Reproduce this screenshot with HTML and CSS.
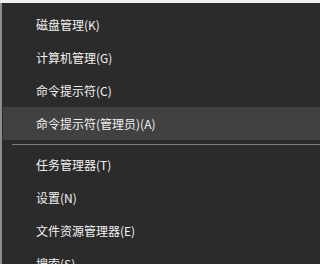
FILE: index.html
```html
<!DOCTYPE html>
<html lang="zh-CN">
<head>
<meta charset="utf-8">
<link rel="stylesheet" href="styles.css">
</head>
<body>
<div class="topstrip"></div>
<div class="menu">
  <div class="item">磁盘管理(K)</div>
  <div class="item">计算机管理(G)</div>
  <div class="item">命令提示符(C)</div>
  <div class="item active">命令提示符(管理员)(A)</div>
  <div class="sep"></div>
  <div class="item">任务管理器(T)</div>
  <div class="item">设置(N)</div>
  <div class="item">文件资源管理器(E)</div>
  <div class="item">搜索(S)</div>
</div>
</body>
</html>
```

FILE: styles.css
```css
html, body {
  margin: 0;
  padding: 0;
  background: #2b2b2b;
  overflow: hidden;
}
.topstrip {
  height: 3px;
  background: #f1f1f1;
}
.menu {
  display: flex;
  flex-direction: column;
  background: #2b2b2b;
  border-left: 2px solid #8e8e8e;
  padding-top: 5px;
  height: 300px;
  font-family: "Noto Sans CJK SC", "Noto Sans", sans-serif;
  font-size: 12px;
  color: #f2f2f2;
}
.item {
  height: 33px;
  line-height: 33px;
  padding-left: 34px;
  white-space: nowrap;
}
.item.active {
  background: #414141;
  margin-left: 1px;
  padding-left: 33px;
}
.sep {
  height: 1px;
  background: #808080;
  margin: 4px 0 3px 10px;
}
```
